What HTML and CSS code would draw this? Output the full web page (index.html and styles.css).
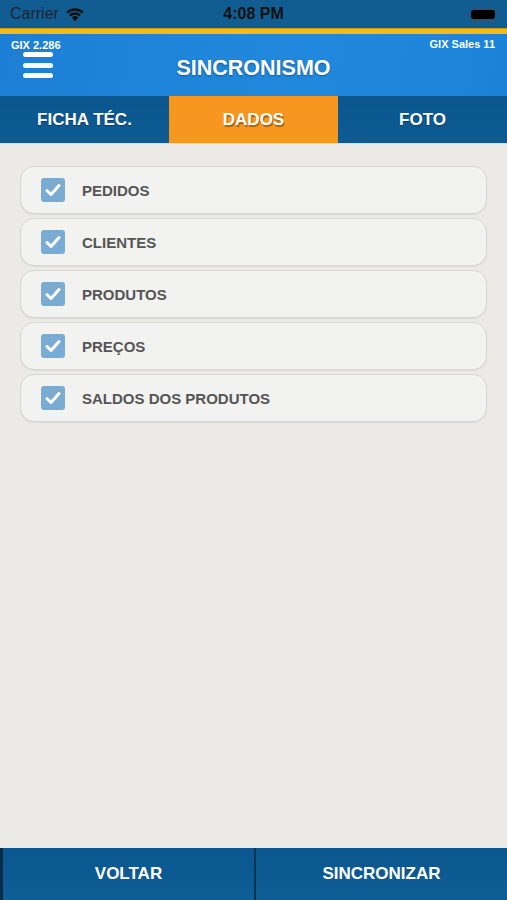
FILE: index.html
```html
<!DOCTYPE html>
<html lang="pt">
<head>
    <meta charset="UTF-8">
    <meta name="viewport" content="width=device-width, initial-scale=1.0">
    <title>Sincronismo</title>
    <link rel="stylesheet" href="styles.css">
</head>
<body>
    <div class="statusbar">
        <div class="carrier">Carrier
            <svg class="wifi" width="22" height="16" viewBox="0 0 20 14">
                <path d="M10 13.5 L7 10.2 A4.5 4.5 0 0 1 13 10.2 Z" fill="#111"/>
                <path d="M4.6 7.6 A7.8 7.8 0 0 1 15.4 7.6 L13.9 9.2 A5.6 5.6 0 0 0 6.1 9.2 Z" fill="#111"/>
                <path d="M2.1 5 A11.3 11.3 0 0 1 17.9 5 L16.4 6.6 A9.1 9.1 0 0 0 3.6 6.6 Z" fill="#111"/>
            </svg>
        </div>
        <div class="clock">4:08 PM</div>
        <div class="battery"><span></span></div>
    </div>
    <div class="stripe"></div>

    <div class="header">
        <span class="version">GIX 2.286</span>
        <span class="app">GIX Sales 11</span>
        <div class="menu"><i></i><i></i><i></i></div>
        <h1>SINCRONISMO</h1>
    </div>

    <div class="tabs">
        <div class="tab">FICHA TÉC.</div>
        <div class="tab active">DADOS</div>
        <div class="tab">FOTO</div>
    </div>

    <div class="content">
        <label class="item"><span class="check"><svg width="16" height="14" viewBox="0 0 16 14"><path d="M2 7.5 L6 11.5 L14 2.5" fill="none" stroke="#fff" stroke-width="3" stroke-linecap="round" stroke-linejoin="round"/></svg></span>PEDIDOS</label>
        <label class="item"><span class="check"><svg width="16" height="14" viewBox="0 0 16 14"><path d="M2 7.5 L6 11.5 L14 2.5" fill="none" stroke="#fff" stroke-width="3" stroke-linecap="round" stroke-linejoin="round"/></svg></span>CLIENTES</label>
        <label class="item"><span class="check"><svg width="16" height="14" viewBox="0 0 16 14"><path d="M2 7.5 L6 11.5 L14 2.5" fill="none" stroke="#fff" stroke-width="3" stroke-linecap="round" stroke-linejoin="round"/></svg></span>PRODUTOS</label>
        <label class="item"><span class="check"><svg width="16" height="14" viewBox="0 0 16 14"><path d="M2 7.5 L6 11.5 L14 2.5" fill="none" stroke="#fff" stroke-width="3" stroke-linecap="round" stroke-linejoin="round"/></svg></span>PREÇOS</label>
        <label class="item"><span class="check"><svg width="16" height="14" viewBox="0 0 16 14"><path d="M2 7.5 L6 11.5 L14 2.5" fill="none" stroke="#fff" stroke-width="3" stroke-linecap="round" stroke-linejoin="round"/></svg></span>SALDOS DOS PRODUTOS</label>
    </div>

    <div class="footer">
        <div class="btn">VOLTAR</div>
        <div class="btn">SINCRONIZAR</div>
    </div>
</body>
</html>
```

FILE: styles.css
```css
* { box-sizing: border-box; }
html, body { height: 100%; }
body { margin: 0; font-family: "Liberation Sans", Arial, sans-serif; background: #ebeae6; display: flex; flex-direction: column; }

.statusbar { height: 28px; background: #115d92; display: flex; align-items: center; justify-content: space-between; padding: 0 10px 0 10px; position: relative; }
.carrier { font-size: 16px; color: #1a2530; display: flex; align-items: center; gap: 5px; }
.clock { position: absolute; left: 0; right: 0; text-align: center; font-size: 16px; font-weight: bold; color: #111; pointer-events: none; }
.battery { width: 28px; height: 13px; border: 1px solid #2a5578; border-radius: 4px; padding: 1px; }
.battery span { display: block; height: 100%; background: #000; border-radius: 3px; }
.stripe { height: 6px; background: #f6b916; border-top: 1px solid #c99a1a; }

.header { height: 62px; background: linear-gradient(100deg, #1c7fd5, #2189dd 60%, #1c82d8); position: relative; color: #fff; }
.version { position: absolute; left: 11px; top: 5px; font-size: 11px; font-weight: bold; }
.app { position: absolute; right: 12px; top: 4px; font-size: 11px; font-weight: bold; }
.menu { position: absolute; left: 23px; top: 18px; width: 30px; display: flex; flex-direction: column; gap: 5.5px; }
.menu i { display: block; height: 5px; background: #fff; border-radius: 3px; }
.header h1 { margin: 0; padding-top: 4px; text-align: center; line-height: 60px; font-size: 21.5px; font-weight: bold; text-shadow: 0 1px 2px rgba(0,0,0,0.35); }

.tabs { height: 48px; display: flex; background: linear-gradient(#0b568e, #0e5b94); border-bottom: 1px solid #dcdcd8; }
.tab { flex: 1; display: flex; align-items: center; justify-content: center; color: #fff; font-size: 17px; font-weight: bold; text-shadow: 0 1px 1px rgba(0,0,0,0.35); }
.tab.active { background: #f7971f; text-shadow: 1px 2px 1px rgba(0,0,0,0.35); }

.content { flex: 1; padding: 22px 20px 0 20px; display: flex; flex-direction: column; gap: 4px; }
.item { height: 48px; background: #f2f2f0; border: 1px solid #d6d6d2; border-radius: 14px; display: flex; align-items: center; padding-left: 20px; font-size: 15px; font-weight: bold; color: #555; box-shadow: 0 1px 1px #dcdcd8; }
.check { width: 24px; height: 24px; border-radius: 3px; background: #7aabd3; display: flex; align-items: center; justify-content: center; margin-right: 17px; }

.footer { height: 52px; display: flex; background: linear-gradient(#0b568e, #0f5e96); border-left: 3px solid #0a2d46; }
.btn { flex: 1; display: flex; align-items: center; justify-content: center; color: #fff; font-size: 17px; font-weight: bold; }
.btn + .btn { border-left: 2px solid #093554; }
```
